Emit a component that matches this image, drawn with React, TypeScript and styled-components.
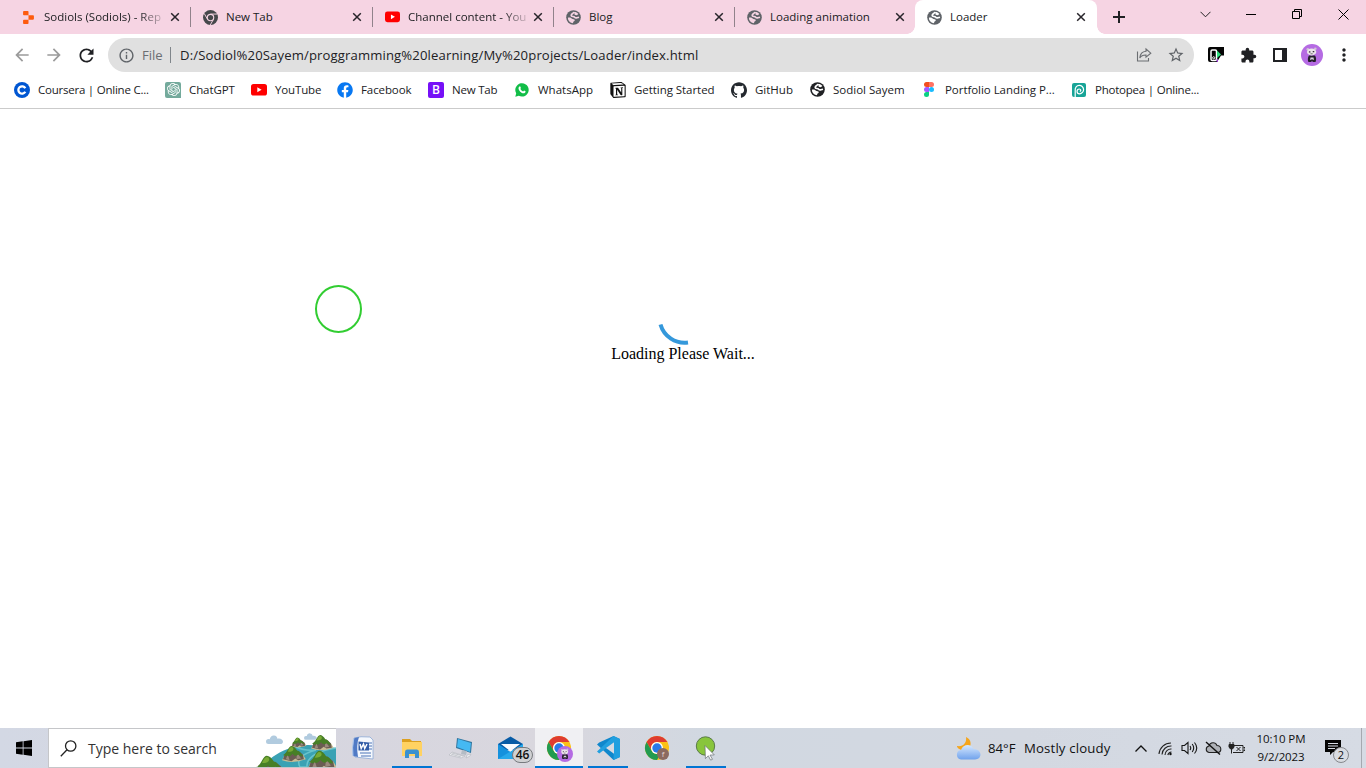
import React from "react";
import styled, { createGlobalStyle } from "styled-components";
import { SiReplit, SiOpenai, SiNotion, SiGithub } from "react-icons/si";
import { FaFacebook } from "react-icons/fa";
import { MdArrowBack, MdArrowForward, MdRefresh, MdExtension, MdStarBorder, MdMoreVert, MdInfoOutline } from "react-icons/md";

const Global = createGlobalStyle`
  * { box-sizing: border-box; }
  html, body { margin: 0; padding: 0; background: #fff; }
  svg { display: block; flex: none; }
`;

const Screen = styled.div`
  width: 1366px;
  height: 768px;
  display: flex;
  flex-direction: column;
  overflow: hidden;
  background: #fff;
  color: #202124;
  font-family: "Open Sans", "Noto Sans", sans-serif;
`;

const Label = styled.span<{ $size?: number; $spacing?: number; $color?: string }>`
  font-size: ${(p) => p.$size ?? 11.5}px;
  letter-spacing: ${(p) => p.$spacing ?? 0}px;
  color: ${(p) => p.$color ?? "#202124"};
  line-height: 18px;
  white-space: nowrap;
`;

/* ---------- tab strip ---------- */
const TabStrip = styled.div`
  height: 34px;
  flex: none;
  display: flex;
  padding-left: 9px;
  background: #f6d4e3;
`;

const Tab = styled.div<{ $active?: boolean; $width: number; $divider?: boolean }>`
  position: relative;
  width: ${(p) => p.$width}px;
  height: 34px;
  display: flex;
  align-items: center;
  padding: 0 11px 0 12px;
  border-radius: 8px 8px 0 0;
  background: ${(p) => (p.$active ? "#fff" : "transparent")};
  &::after {
    content: "";
    display: ${(p) => (p.$divider ? "block" : "none")};
    position: absolute;
    right: 0;
    top: 7px;
    width: 1px;
    height: 20px;
    background: #91828b;
  }
`;

const TabFoot = styled.span<{ $side: "left" | "right" }>`
  position: absolute;
  bottom: 0;
  ${(p) => p.$side}: -8px;
  width: 8px;
  height: 8px;
  background: radial-gradient(circle at ${(p) => (p.$side === "left" ? "0 0" : "8px 0")}, #f6d4e3 7.5px, #fff 8px);
`;

const TabTitle = styled.div<{ $fade?: boolean }>`
  width: 119px;
  margin-left: 8px;
  display: flex;
  mask-image: ${(p) => (p.$fade ? "linear-gradient(90deg, #000 80%, rgba(0, 0, 0, 0.15) 100%)" : "none")};
`;

const TabIcon = styled.span`
  width: 15px;
  flex: none;
  display: flex;
  justify-content: center;
`;

const TabClose = styled.span<{ $shift?: number }>`
  margin-left: auto;
  margin-right: ${(p) => p.$shift ?? 0}px;
`;

const NewTab = styled.div`
  width: 44px;
  display: flex;
  align-items: center;
  justify-content: center;
`;

const WindowControls = styled.div`
  margin-left: auto;
  height: 28px;
  display: flex;
`;

const WindowButton = styled.div`
  width: 46px;
  display: flex;
  align-items: center;
  justify-content: center;
`;

/* ---------- toolbar ---------- */
const Toolbar = styled.div`
  height: 42px;
  flex: none;
  display: flex;
  align-items: center;
  padding: 0 6px;
`;

const ToolButton = styled.div`
  width: 32px;
  height: 32px;
  display: flex;
  align-items: center;
  justify-content: center;
`;

const NavGroup = styled.div`
  width: 102px;
  display: flex;
`;

const Omnibox = styled.div`
  width: 1086px;
  height: 34px;
  border-radius: 17px;
  background: #e0e0e0;
  display: flex;
  align-items: center;
  padding: 0 2px 0 10px;
`;

const FileChip = styled.span`
  margin-left: 7px;
  width: 28px;
  display: flex;
`;

const OmniDivider = styled.span`
  width: 1px;
  height: 16px;
  background: #80868b;
  margin-right: 9px;
`;

const OmniActions = styled.div`
  margin-left: auto;
  display: flex;
`;

const Extensions = styled.div`
  margin-left: 6px;
  display: flex;
`;

/* ---------- bookmarks ---------- */
const BookmarksBar = styled.div`
  height: 33px;
  flex: none;
  display: flex;
  padding: 0 0 5px 14px;
  border-bottom: 1px solid #cbcbcb;
`;

const Bookmark = styled.div<{ $width: number }>`
  width: ${(p) => p.$width}px;
  display: flex;
  align-items: center;
  gap: 8px;
`;

const BookmarkIcon = styled.span`
  width: 16px;
  height: 16px;
  flex: none;
  display: flex;
  align-items: center;
  justify-content: center;
`;

const ChatTile = styled.span`
  width: 16px;
  height: 16px;
  display: flex;
  align-items: center;
  justify-content: center;
  color: #fff;
  background: #74aa9c;
  border-radius: 2px 2px 0 2px;
`;

const BootstrapTile = styled.span`
  width: 16px;
  height: 16px;
  border-radius: 2px;
  background: #7610f7;
  color: #fff;
  font-size: 12px;
  font-weight: 600;
  line-height: 16px;
  text-align: center;
`;

/* ---------- page ---------- */
const Page = styled.main`
  position: relative;
  height: 619px;
  flex: none;
  display: flex;
  flex-direction: column;
  align-items: center;
  padding-top: 176px;
`;

const ClickRing = styled.span`
  position: absolute;
  left: 315px;
  top: 176px;
  width: 47px;
  height: 48px;
  border: 2px solid #32cd32;
  border-radius: 50%;
`;

const LoadingText = styled.p`
  margin: 0;
  font-family: "Liberation Serif", serif;
  font-size: 16px;
  line-height: 18px;
  color: #000;
`;

/* ---------- taskbar ---------- */
const Taskbar = styled.div`
  height: 40px;
  flex: none;
  display: flex;
  background: linear-gradient(90deg, #d3d8e4 0, #d7d6df 27%, #d9d7de 40%, #d1d8e1 52%, #d3d8e1 75%, #d6dbe4 100%);
`;

const StartButton = styled.div`
  width: 48px;
  display: flex;
  align-items: center;
  justify-content: center;
`;

const SearchBox = styled.div`
  width: 288px;
  height: 40px;
  border: 1px solid #c5c6c9;
  border-right: none;
  background: #fff;
  display: flex;
  align-items: center;
  padding-left: 11px;
`;

const SearchLabel = styled.div`
  margin-left: 11px;
  width: 168px;
`;

const Apps = styled.div`
  display: flex;
  padding-left: 3px;
`;

const AppButton = styled.div<{ $open?: boolean; $active?: boolean }>`
  position: relative;
  width: 49px;
  height: 40px;
  display: flex;
  align-items: center;
  justify-content: center;
  background: ${(p) => (p.$active ? "#f0f0f3" : "transparent")};
  background-clip: content-box;
  padding-right: 1px;
  &::after {
    content: "";
    display: ${(p) => (p.$open ? "block" : "none")};
    position: absolute;
    left: ${(p) => (p.$active ? 0 : 4)}px;
    right: ${(p) => (p.$active ? 1 : 5)}px;
    bottom: 0;
    height: 2px;
    background: #0075d3;
  }
`;

const MailBadge = styled.span`
  position: absolute;
  left: 26px;
  top: 19px;
  width: 21px;
  height: 16px;
  border: 1px solid #777a7e;
  border-radius: 8px;
  background: #d0d1d3;
  color: #111;
  font-size: 12px;
  font-weight: 600;
  line-height: 14px;
  text-align: center;
`;

const Tray = styled.div`
  margin-left: auto;
  height: 40px;
  display: flex;
  align-items: center;
`;

const Weather = styled.div`
  width: 175px;
  display: flex;
  align-items: center;
`;

const Temperature = styled.span`
  margin-left: 7px;
  width: 36px;
  display: flex;
`;

const TrayIcons = styled.div`
  width: 115px;
  display: flex;
  align-items: center;
`;

const TrayCell = styled.span<{ $width: number }>`
  width: ${(p) => p.$width}px;
  display: flex;
  justify-content: center;
`;

const Clock = styled.div`
  width: 70px;
  display: flex;
  flex-direction: column;
  align-items: center;
`;

const Notifications = styled.div`
  position: relative;
  width: 45px;
  height: 40px;
  padding: 12px 0 0 9px;
`;

const Count = styled.span`
  position: absolute;
  left: 17px;
  top: 19px;
  width: 16px;
  height: 16px;
  border: 1px solid #86888c;
  border-radius: 50%;
  background: #d9dce2;
  font-size: 11px;
  line-height: 14px;
  text-align: center;
  color: #111;
`;

const ShowDesktop = styled.div`
  width: 5px;
  height: 40px;
  border-left: 1px solid #a5a9b0;
`;

/* ---------- drawings ---------- */
const Cross = () => (
  <svg width="10" height="10" viewBox="0 0 10 10" stroke="#27242a" strokeWidth="1.5">
    <path d="M1.2 1.2l7.6 7.6M8.8 1.2L1.2 8.8" />
  </svg>
);

const Globe = ({ color = "#5f6368", hole = "#fff" }: { color?: string; hole?: string }) => (
  <svg width="15" height="15" viewBox="0 0 16 16" fill="none">
    <circle cx="8" cy="8" r="7.800" fill={color} />
    <path d="M8.600 2.100C8.400 3.600 5.400 4 5.500 5.700c.1 1.600 2.500.8 3.400 1.700.7.800 1.600 1.300 2.800.9l2.200-.5" stroke={hole} strokeWidth="1.700" />
    <path d="M8.600 2.100c2 0 3.700.7 4.600 2.200l-1.700 1.200-2.300-.4Z" fill={hole} />
    <path d="M2 8.200c1.900-.2 3.300 0 4.200 1 .8.800 3.200.2 3.200 1.600 0 1.200-1.500.9-1.600 2-.1.700-.3 1-.8 1.200C3.900 13.500 2 11.200 2 8.200Z" fill={hole} />
  </svg>
);

const ChromeGrey = () => (
  <svg width="15" height="15" viewBox="0 0 24 24">
    <circle cx="12" cy="12" r="12" fill="#46484b" />
    <path d="M12 6.500h10.600M7.200 14.800L2 5.700M16.800 14.800L11.500 24" stroke="#f6d4e3" strokeWidth="1.500" />
    <circle cx="12" cy="12" r="6" fill="#f6d4e3" />
    <circle cx="12" cy="12" r="4.200" fill="#46484b" />
  </svg>
);

const YouTube = ({ width = 16 }: { width?: number }) => (
  <svg width={width} height="12" viewBox="0 0 16 12">
    <rect width="16" height="11.500" rx="2.600" fill="#f00" />
    <path d="M6.300 3.300v5l4.300-2.500Z" fill="#fff" />
  </svg>
);

const WhatsApp = () => (
  <svg width="14" height="14" viewBox="0 0 14 14">
    <path d="M.3 13.700 1.200 10.300A6.700 6.700 0 1 1 3.800 12.800Z" fill="#12bd48" />
    <path d="M4.600 3.400c.5-.2.700 0 .9.500l.4 1c0 .4-.6.700-.5 1 .6 1.200 1.500 2 2.700 2.500.3 0 .7-.9 1-.8l1.400.7c.2.300-.1 1.600-1.200 1.900C7 11 3.500 7.700 3.500 5.200c0-.8.500-1.500 1.100-1.800Z" fill="#fff" />
  </svg>
);

const Coursera = () => (
  <svg width="16" height="16" viewBox="0 0 16 16">
    <circle cx="8" cy="8" r="8" fill="#0056d2" />
    <path d="M11.300 6.200A3.700 3.700 0 1 0 11.300 9.800" fill="none" stroke="#fff" strokeWidth="2.300" />
  </svg>
);

const Figma = () => (
  <svg width="10" height="15" viewBox="0 0 10 15">
    <path d="M5 0H2.500a2.500 2.500 0 0 0 0 5H5Z" fill="#f24e1e" />
    <path d="M5 0h2.500a2.500 2.500 0 0 1 0 5H5Z" fill="#ff7262" />
    <path d="M5 5H2.500a2.500 2.500 0 0 0 0 5H5Z" fill="#a259ff" />
    <circle cx="7.500" cy="7.500" r="2.500" fill="#1abcfe" />
    <path d="M5 10H2.500A2.500 2.500 0 1 0 5 12.500Z" fill="#0acf83" />
  </svg>
);

const Photopea = () => (
  <svg width="14" height="14" viewBox="0 0 14 14" fill="none">
    <rect width="14" height="14" rx="2" fill="#18a497" />
    <path d="M3.200 14V7a4.200 4.200 0 1 1 4.300 3.800c-3.200 0-3.200-4.800-.2-4.800 1.700 0 1.900 2.200.5 2.400" stroke="#fff" strokeWidth="1.200" />
  </svg>
);

const Panda = ({ size }: { size: number }) => (
  <svg width={size} height={size} viewBox="0 0 22 22">
    <circle cx="11" cy="11" r="11" fill="#b56be3" />
    <path d="M7.500 18c-1.200-2-.5-5.500.5-6.500h6c1 1 1.700 4.500.5 6.500h-2.500l-1-1-1 1Z" fill="#24202b" />
    <circle cx="6.800" cy="5.300" r="1.300" fill="#cfc3d4" />
    <circle cx="14.300" cy="4.800" r="1.300" fill="#cfc3d4" />
    <ellipse cx="10.600" cy="7.900" rx="4.700" ry="3.500" fill="#ebe4ea" />
    <ellipse cx="8.700" cy="7.900" rx=".9" ry=".6" fill="#24202b" />
    <ellipse cx="12.500" cy="7.700" rx=".9" ry=".6" fill="#24202b" />
    <path d="M9.500 9.800h2.200" stroke="#24202b" strokeWidth=".6" />
    <path d="M9.500 13.500h3l.5 2.500-2-.8-2 .8Z" fill="#d9d0de" />
  </svg>
);

const RecorderIcon = () => (
  <svg width="16" height="16" viewBox="0 0 16 16">
    <path d="M2 0h14v8.500h-3L9 15H2a2 2 0 0 1-2-2V2a2 2 0 0 1 2-2Z" fill="#050505" />
    <rect x="3" y="3" width="5.500" height="10.500" rx="1.200" fill="#050505" stroke="#fff" strokeWidth="1.500" />
    <circle cx="5.700" cy="10.800" r="1.100" fill="#050505" stroke="#fff" strokeWidth=".9" />
    <path d="M9 3.500 13 7.500 9 11Z" fill="#2fe07f" />
    <path d="M9.300 12v3" stroke="#a23be0" strokeWidth="1.200" />
  </svg>
);

const ShareIcon = () => (
  <svg width="16" height="16" viewBox="0 0 16 16" fill="none" stroke="#6b6e72" strokeWidth="1.100">
    <path d="M1.500 4.500v9.500h11v-3" />
    <path d="M10 2l4.800 4.200L10 10.200V8C7 7.900 5 9 3.800 11 4.100 7.300 6.400 4.600 10 4.300Z" />
  </svg>
);

const Search = () => (
  <svg width="17" height="17" viewBox="0 0 17 17" fill="none" stroke="#222" strokeWidth="1.300">
    <circle cx="10.700" cy="6" r="5.200" />
    <path d="M7 9.800.8 16.200" />
  </svg>
);

const WindowsLogo = () => (
  <svg width="16" height="16" viewBox="0 0 16 16" fill="#000">
    <path d="M0 2.200 6.700 1.300V7.600H0ZM7.500 1.200 16 0V7.600H7.500ZM0 8.400H6.700V14.700L0 13.800ZM7.500 8.400H16V16L7.500 14.800Z" />
  </svg>
);

const Cloud = ({ x, y, scale = 1 }: { x: number; y: number; scale?: number }) => (
  <path
    transform={`translate(${x} ${y}) scale(${scale})`}
    d="M2.500 9a2.500 2.500 0 0 1 0-5c.8 0 .8 0 1.200.3C4.200 1.600 6 .3 8 .5c2.200.2 3.200 1.700 3.400 3.200C14.500 3 17 4.600 17 6.700 17 8.200 15.600 9 14.500 9Z"
    fill="#b1cbdf"
  />
);

const Island = ({ x, y, scale = 1 }: { x: number; y: number; scale?: number }) => (
  <g transform={`translate(${x} ${y}) scale(${scale})`}>
    <path d="M-1 14Q10 18 24 13L21 8H2Z" fill="#c9bd95" />
    <path d="M0 13 2 7l5-3h9l5 4 1 5-6 1-3-2-4 3Z" fill="#6b5c53" />
    <path d="m5 8 2 6-4-1ZM15 6l4 6-5 1Z" fill="#9a8a7c" />
    <path d="M0 9Q3 7 5 3 7-1 9-1q3 0 6 5 3 0 6 6-3 0-5-2-3 3-6-1-3 4-5 2-2 2-5-1Z" fill="#477f26" />
    <path d="M5 5Q7 0 9 0q2 0 2 2 0 3-6 3Z" fill="#79aa35" />
  </g>
);

const Landscape = () => (
  <svg width="80" height="38" viewBox="0 0 80 38">
    <Cloud x={10} y={6} />
    <Cloud x={48} y={4} scale={0.75} />
    <path d="M3 38C15 30 22 22 35 19q10-5 31-2l14 2v19Z" fill="#3aa2b4" />
    <path d="M40 18q8 4 20 3-22 6-16 17h7q-1-11 19-17l10-2" fill="none" stroke="#68c3cc" strokeWidth="1.500" />
    <Island x={36} y={9} scale={0.6} />
    <Island x={56} y={7} scale={0.9} />
    <Island x={27} y={18} scale={0.95} />
    <Island x={53} y={23} scale={1.150} />
    <Island x={0} y={28} scale={1.200} />
  </svg>
);

const WordIcon = () => (
  <svg width="24" height="24" viewBox="0 0 24 24">
    <path d="M3 2Q9 0 19 1l3 3v19l-18-2Z" fill="#f5f8fd" stroke="#8ca8d4" strokeWidth=".8" />
    <path d="M3.500 2Q1 10 2 20l5 1Q5 9 8 1Z" fill="#507ac5" />
    <path d="M2.500 3Q1 12 2 20" stroke="#a8c4ed" fill="none" />
    <path d="M7.500 5.500 18 6.500v8L7.500 14.500Z" fill="#325ca7" />
    <path d="m9 8 1.200 4.500L12.500 8l1.200 4.500L16 8" fill="none" stroke="#fff" strokeWidth="1.500" />
    <path d="M18 7h3M18 10h3M18 13h3M9 17h11M10 20h10" stroke="#4d74b7" />
  </svg>
);

const ExplorerIcon = () => (
  <svg width="22" height="20" viewBox="0 0 22 20">
    <path d="M1 1h8l2 2h9v5H1Z" fill="#dca020" />
    <path d="M1 4h20v14H1Z" fill="#ffd262" />
    <path d="M4 20v-6q0-2.500 2-2.500h10q2 0 2 2.500v6h-4v-4H8v4Z" fill="#3a91d0" />
  </svg>
);

const ComputerIcon = () => (
  <svg width="25" height="24" viewBox="0 0 25 24">
    <path d="m8 2 15 4-1 11L7 12Z" fill="#31759e" />
    <path d="m9 3 13 4-1 9L8 11Z" fill="#45b9f2" />
    <path d="m13 14-1 4 5 1 1-4Z" fill="#b4bcc5" />
    <path d="m3 16 13 4-4 2L0 19ZM18 19l4-1-1 2-4 2Z" fill="#f0f1f4" stroke="#b1b5bc" strokeWidth=".6" />
    <path d="m3 17 11 3M2 18l10 3" stroke="#b1b5bc" strokeWidth=".7" />
  </svg>
);

const MailIcon = () => (
  <svg width="25" height="24" viewBox="0 0 25 24">
    <path d="m0 8 12.500-7.500L25 8v6H0Z" fill="#075ba6" />
    <path d="M0 8 12.500 16 25 8v15H0Z" fill="#1591dd" />
    <path d="M0 23 25 8v15Z" fill="#28a8ea" />
    <path d="M3 8h19l-9.500 7.500Z" fill="#f7fbff" />
  </svg>
);

const ChromeIcon = ({ children }: { children?: React.ReactNode }) => (
  <svg width="26" height="28" viewBox="0 0 26 28" overflow="visible">
    <circle cx="13" cy="14" r="12" fill="#fbc116" />
    <path d="M2.600 8A12 12 0 0 1 23.400 8H13A6 6 0 0 0 7.800 17Z" fill="#df3c30" />
    <path d="M2.600 8A12 12 0 0 0 13 26l5.200-9H18.200A6 6 0 0 1 7.800 17Z" fill="#229b50" />
    <circle cx="13" cy="14" r="6" fill="#fff" />
    <circle cx="13" cy="14" r="4.700" fill="#2979e8" />
    {children}
  </svg>
);

const CodeIcon = () => (
  <svg width="24" height="24" viewBox="0 0 24 24">
    <path d="M17.500 0 24 3v18l-6.500 3L1 8.500 3.200 6.500Z" fill="#0f87cc" />
    <path d="M17.500 24 24 21V3L17.500 0 1 15.500l2.200 2L18 6.300Z" fill="#219fdf" />
    <path d="M18 6.300v11.400L10 12Z" fill="#d7dae2" />
    <path d="M0 9.500 3 12l-3 2.500Z" fill="#d7dae2" />
  </svg>
);

const ClickerIcon = () => (
  <svg width="24" height="25" viewBox="0 0 24 25">
    <circle cx="11.500" cy="10" r="9.200" fill="#88c53c" stroke="#5a7b48" />
    <path d="m11 9.500 9.300 9.400-4.300.2 2.500 4.200-1.900.8-2.300-4.300-2.900 2.800Z" fill="#fff" stroke="#687073" strokeWidth=".7" />
  </svg>
);

const WeatherIcon = () => (
  <svg width="25" height="24" viewBox="0 0 25 24">
    <defs>
      <linearGradient id="cloud" x2="0" y2="1">
        <stop stopColor="#d7e9ff" />
        <stop offset="1" stopColor="#70a2ec" />
      </linearGradient>
    </defs>
    <path d="M10 1c7 3 6 13-3 13-3 0-6-2-6-4 6 1 10-3 9-9Z" fill="#f5a51c" />
    <path d="M5 23.500a4.800 4.800 0 0 1 0-9.500c2-6 10-7 12.500-1 9 0 9 10.500 1.500 10.500Z" fill="url(#cloud)" />
  </svg>
);

const Wifi = () => (
  <svg width="15" height="15" viewBox="0 0 15 15" fill="none" stroke="#222" strokeWidth="1.100">
    <path d="M1 13A12 12 0 0 1 13 2M4 13.500A9 9 0 0 1 13.500 5M7 14A6 6 0 0 1 13.500 8M9.800 14a4 4 0 0 1 3.700-3" />
    <circle cx="12.500" cy="13" r="1.200" fill="#111" stroke="none" />
  </svg>
);

const Speaker = () => (
  <svg width="18" height="14" viewBox="0 0 18 14" fill="none" stroke="#161616" strokeWidth="1.100">
    <path d="M1 4.500h2.500L7 1.500v11L3.500 9.500H1ZM9 5q1.500 2 0 4M11.200 3q3 4 0 8M13.500 1.500q4.500 5.500 0 11" />
  </svg>
);

const CloudOff = () => (
  <svg width="17" height="14" viewBox="0 0 17 14" fill="none" stroke="#222" strokeWidth="1.100">
    <path d="M4 11.500a3.300 3.300 0 0 1 0-6.500C5 1 10.500.7 12 4.500c5 .3 5 6.800.5 7Z" fill="#aeb1b7" />
    <path d="m1 1 14 12.500" stroke="#111" strokeWidth="1.400" />
  </svg>
);

const Battery = () => (
  <svg width="17" height="14" viewBox="0 0 17 14" fill="none" stroke="#222" strokeWidth="1">
    <path d="M6 4.500h9v7H5M15.500 6.500H17v3h-1.500M8.500 6l4 4M12.500 6l-4 4" />
    <path d="M1 3.500h5v2.500l-1.500 2h-2L1 6Z" fill="#222" />
    <path d="M2 1v3M5 1v3M3.500 8v4.500" />
  </svg>
);

const tabs = [
  { title: "Sodiols (Sodiols) - Rep", icon: <SiReplit size={13} color="#fd5b0e" />, fade: true, width: 182 },
  { title: "New Tab", icon: <ChromeGrey />, width: 182 },
  { title: "Channel content - You", icon: <YouTube width={15} />, fade: true, width: 181 },
  { title: "Blog", icon: <Globe hole="#f6d4e3" />, width: 181 },
  { title: "Loading animation", icon: <Globe hole="#f6d4e3" />, width: 180, shift: -1 },
  { title: "Loader", icon: <Globe />, active: true, width: 182 },
];

const bookmarks = [
  { name: "Coursera | Online C...", width: 151, spacing: -0.23, icon: <Coursera /> },
  { name: "ChatGPT", width: 86, spacing: -0.1, icon: <ChatTile><SiOpenai size={13} /></ChatTile> },
  { name: "YouTube", width: 86, spacing: -0.15, icon: <YouTube /> },
  { name: "Facebook", width: 91, spacing: -0.1, icon: <FaFacebook size={16} color="#0878f2" /> },
  { name: "New Tab", width: 86, spacing: -0.2, icon: <BootstrapTile>B</BootstrapTile> },
  { name: "WhatsApp", width: 96, icon: <WhatsApp /> },
  { name: "Getting Started", width: 121, spacing: -0.05, icon: <SiNotion size={16} color="#111" /> },
  { name: "GitHub", width: 78, icon: <SiGithub size={16} color="#24292f" /> },
  { name: "Sodiol Sayem", width: 112, icon: <Globe color="#202124" /> },
  { name: "Portfolio Landing P...", width: 150, spacing: -0.05, icon: <Figma /> },
  { name: "Photopea | Online...", width: 150, spacing: -0.22, icon: <Photopea /> },
];

export default function App() {
  return (
    <Screen>
      <Global />
      <TabStrip>
        {tabs.map((tab, i) => (
          <Tab key={tab.title} $width={tab.width} $active={tab.active} $divider={i < 4}>
            {tab.active && <TabFoot $side="left" />}
            <TabIcon>{tab.icon}</TabIcon>
            <TabTitle $fade={tab.fade}>
              <Label>{tab.title}</Label>
            </TabTitle>
            <TabClose $shift={tab.shift}><Cross /></TabClose>
            {tab.active && <TabFoot $side="right" />}
          </Tab>
        ))}
        <NewTab>
          <svg width="12" height="12" viewBox="0 0 12 12" stroke="#202124" strokeWidth="2"><path d="M0 6h12M6 0v12" /></svg>
        </NewTab>
        <WindowControls>
          <WindowButton><svg width="11" height="7" viewBox="0 0 11 7" fill="none" stroke="#222"><path d="m.5.8 5 5 5-5" /></svg></WindowButton>
          <WindowButton><svg width="10" height="1" viewBox="0 0 10 1"><path d="M0 0h10v1H0Z" /></svg></WindowButton>
          <WindowButton><svg width="10" height="10" viewBox="0 0 10 10" fill="none" stroke="#000"><path d="M.5 2.500h7v7h-7ZM2.500 2.500v-2h7v7h-2" /></svg></WindowButton>
          <WindowButton><svg width="11" height="11" viewBox="0 0 11 11" stroke="#000"><path d="m.5.5 10 10M10.500.5l-10 10" /></svg></WindowButton>
        </WindowControls>
      </TabStrip>

      <Toolbar>
        <NavGroup>
          <ToolButton><MdArrowBack size={20} color="#9b9b9b" /></ToolButton>
          <ToolButton><MdArrowForward size={20} color="#9b9b9b" /></ToolButton>
          <ToolButton><MdRefresh size={21} color="#202124" /></ToolButton>
        </NavGroup>
        <Omnibox>
          <MdInfoOutline size={17} color="#5f6368" />
          <FileChip><Label $size={13.1} $color="#6b6e72">File</Label></FileChip>
          <OmniDivider />
          <Label $size={13.1} $spacing={0.14}>D:/Sodiol%20Sayem/proggramming%20learning/My%20projects/Loader/index.html</Label>
          <OmniActions>
            <ToolButton><ShareIcon /></ToolButton>
            <ToolButton><MdStarBorder size={18} color="#5f6368" /></ToolButton>
          </OmniActions>
        </Omnibox>
        <Extensions>
          <ToolButton><RecorderIcon /></ToolButton>
          <ToolButton><MdExtension size={17} color="#202124" /></ToolButton>
          <ToolButton><svg width="14" height="14" viewBox="0 0 14 14"><path d="M0 0h14v14H0ZM2 2v10h7V2Z" fill="#202124" fillRule="evenodd" /></svg></ToolButton>
          <ToolButton><Panda size={22} /></ToolButton>
          <ToolButton><MdMoreVert size={20} color="#202124" /></ToolButton>
        </Extensions>
      </Toolbar>

      <BookmarksBar>
        {bookmarks.map((b) => (
          <Bookmark key={b.name} $width={b.width}>
            <BookmarkIcon>{b.icon}</BookmarkIcon>
            <Label $spacing={b.spacing}>{b.name}</Label>
          </Bookmark>
        ))}
      </BookmarksBar>

      <Page>
        <ClickRing />
        <svg width="60" height="60" viewBox="0 0 60 60" fill="none">
          <path d="M7.500 39.500A25 25 0 0 0 35 57.500" stroke="#3498db" strokeWidth="4" />
        </svg>
        <LoadingText>Loading Please Wait...</LoadingText>
      </Page>

      <Taskbar>
        <StartButton><WindowsLogo /></StartButton>
        <SearchBox>
          <Search />
          <SearchLabel><Label $size={14} $color="#333">Type here to search</Label></SearchLabel>
          <Landscape />
        </SearchBox>
        <Apps>
          <AppButton><WordIcon /></AppButton>
          <AppButton $open><ExplorerIcon /></AppButton>
          <AppButton><ComputerIcon /></AppButton>
          <AppButton><MailIcon /><MailBadge>46</MailBadge></AppButton>
          <AppButton $open $active>
            <ChromeIcon><g transform="translate(11 12)"><Panda size={16} /></g></ChromeIcon>
          </AppButton>
          <AppButton $open><CodeIcon /></AppButton>
          <AppButton>
            <ChromeIcon>
              <circle cx="19" cy="20" r="6" fill="#8b6a60" />
              <text x="19" y="23" fontSize="8" fill="#e4d8d3" textAnchor="middle">f</text>
            </ChromeIcon>
          </AppButton>
          <AppButton $open><ClickerIcon /></AppButton>
        </Apps>
        <Tray>
          <Weather>
            <WeatherIcon />
            <Temperature><Label $size={13.200} $color="#111">84°F</Label></Temperature>
            <Label $size={13.200} $spacing={0.15} $color="#111">Mostly cloudy</Label>
          </Weather>
          <TrayIcons>
            <TrayCell $width={20}><svg width="12" height="7" viewBox="0 0 12 7" fill="none" stroke="#111" strokeWidth="1.300"><path d="m.5 6.500 5.500-5.500 5.500 5.500" /></svg></TrayCell>
            <TrayCell $width={29}><Wifi /></TrayCell>
            <TrayCell $width={20}><Speaker /></TrayCell>
            <TrayCell $width={27}><CloudOff /></TrayCell>
            <TrayCell $width={19}><Battery /></TrayCell>
          </TrayIcons>
          <Clock>
            <Label $color="#111" $spacing={-0.1}>10:10 PM</Label>
            <Label $color="#111" $spacing={-0.1}>9/2/2023</Label>
          </Clock>
          <Notifications>
            <svg width="16" height="15" viewBox="0 0 16 15"><path d="M0 0h16v12H8l-3 3v-3H0Z" fill="#050505" /><path d="M3 3.500h10M3 6h10M3 8.500h7" stroke="#d6dbe4" /></svg>
            <Count>2</Count>
          </Notifications>
          <ShowDesktop />
        </Tray>
      </Taskbar>
    </Screen>
  );
}
